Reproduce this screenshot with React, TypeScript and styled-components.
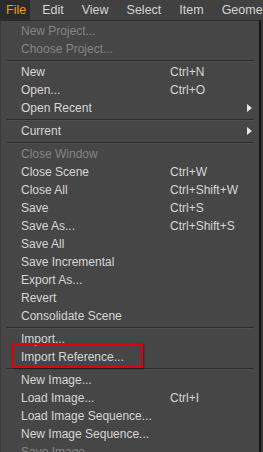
import React from "react"
import styled, { createGlobalStyle } from "styled-components"

const GlobalStyle = createGlobalStyle`
    html, body {
        margin: 0;
        padding: 0;
        background: #3b3b3b;
        overflow: hidden;
    }
    body {
        font-family: "Liberation Sans", Arial, sans-serif;
        font-size: 12px;
    }
`

const Page = styled.div`
    width: 263px;
    height: 452px;
    overflow: hidden;
    background: #3b3b3b;
`

const MenuBar = styled.div`
    display: flex;
    flex-flow: row nowrap;
    gap: 6px;
    height: 20px;
    background: #414141;
    white-space: nowrap;
`

const Tab = styled.div<{ $active?: boolean }>`
    display: flex;
    align-items: center;
    padding: ${(p) => (p.$active ? "0 4px 0 6px" : "0 6px")};
    font-size: 12.5px;
    color: ${(p) => (p.$active ? "#f5a000" : "#d4d4d4")};
    background: ${(p) => (p.$active ? "#2a2a2a" : "transparent")};
`

const Menu = styled.div`
    width: 258px;
    background: #464646;
    border-top: 1px solid #2b2b2b;
    border-left: 1px solid #3a3a3a;
    border-right: 2px solid #151515;
    padding-top: 1px;
`

const Row = styled.div<{ $disabled?: boolean }>`
    position: relative;
    display: grid;
    grid-template-columns: 149px 1fr 12px;
    align-items: center;
    height: 18px;
    padding-left: 20px;
    color: ${(p) => (p.$disabled ? "#858585" : "#d6d6d6")};
    white-space: nowrap;
`

const Shortcut = styled.span`
    color: #d6d6d6;
`

const Arrow = styled.span`
    width: 0;
    height: 0;
    border-top: 4px solid transparent;
    border-bottom: 4px solid transparent;
    border-left: 5px solid #e6e6e6;
`

const Separator = styled.div`
    height: 5px;
    display: flex;
    align-items: center;
    &::before {
        content: "";
        flex: 1;
        margin: 0 5px 0 6px;
        height: 1px;
        background: #2c2c2c;
        box-shadow: 0 1px 0 #4e4e4e;
    }
`

const Highlight = styled.div`
    position: absolute;
    left: 11px;
    top: -5px;
    width: 131px;
    height: 25px;
    box-sizing: border-box;
    border: 2px solid #e3000b;
    box-shadow: 1px 1px 2px rgba(0, 0, 0, 0.45);
    pointer-events: none;
`

type Item =
    | { sep: true }
    | {
          sep?: false
          label: string
          shortcut?: string
          disabled?: boolean
          submenu?: boolean
          marked?: boolean
      }

const items: Item[] = [
    { label: "New Project...", disabled: true },
    { label: "Choose Project...", disabled: true },
    { sep: true },
    { label: "New", shortcut: "Ctrl+N" },
    { label: "Open...", shortcut: "Ctrl+O" },
    { label: "Open Recent", submenu: true },
    { sep: true },
    { label: "Current", submenu: true },
    { sep: true },
    { label: "Close Window", disabled: true },
    { label: "Close Scene", shortcut: "Ctrl+W" },
    { label: "Close All", shortcut: "Ctrl+Shift+W" },
    { label: "Save", shortcut: "Ctrl+S" },
    { label: "Save As...", shortcut: "Ctrl+Shift+S" },
    { label: "Save All" },
    { label: "Save Incremental" },
    { label: "Export As..." },
    { label: "Revert" },
    { label: "Consolidate Scene" },
    { sep: true },
    { label: "Import..." },
    { label: "Import Reference...", marked: true },
    { sep: true },
    { label: "New Image..." },
    { label: "Load Image...", shortcut: "Ctrl+I" },
    { label: "Load Image Sequence..." },
    { label: "New Image Sequence..." },
    { label: "Save Image", disabled: true },
]

const tabs = ["File", "Edit", "View", "Select", "Item", "Geometry"]

export default function App() {
    return (
        <Page>
            <GlobalStyle />
            <MenuBar>
                {tabs.map((t, i) => (
                    <Tab key={t} $active={i === 0}>
                        {t}
                    </Tab>
                ))}
            </MenuBar>
            <Menu>
                {items.map((it, i) =>
                    it.sep ? (
                        <Separator key={i} />
                    ) : (
                        <Row key={i} $disabled={it.disabled}>
                            <span>{it.label}</span>
                            <Shortcut>{it.shortcut}</Shortcut>
                            {it.submenu ? <Arrow /> : <span />}
                            {it.marked && <Highlight />}
                        </Row>
                    )
                )}
            </Menu>
        </Page>
    )
}
